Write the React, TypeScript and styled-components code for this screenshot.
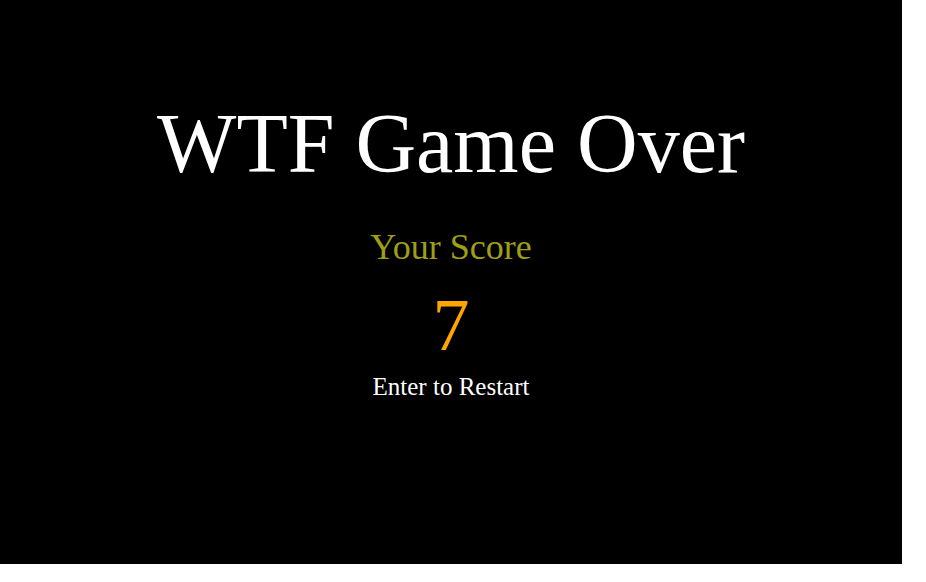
import React from "react";
import styled, { createGlobalStyle } from "styled-components";

const Global = createGlobalStyle`
  html, body { margin: 0; padding: 0; background: #ffffff; }
  body { font-family: Georgia, "Liberation Serif", serif; }
`;

const Screen = styled.div`
  width: 902px;
  height: 564px;
  background: #000000;
  display: flex;
  flex-direction: column;
  align-items: center;
  box-sizing: border-box;
  padding-top: 96px;
`;

const Title = styled.h1`
  margin: 0;
  font-family: Georgia, "Liberation Serif", serif;
  font-weight: normal;
  font-size: 84px;
  line-height: 96px;
  color: #ffffff;
`;

const Label = styled.div<{ $color: string; $size: number; $line: number; $mt: number }>`
  margin-top: ${(p) => p.$mt}px;
  font-family: Georgia, "Liberation Serif", serif;
  font-size: ${(p) => p.$size}px;
  line-height: ${(p) => p.$line}px;
  color: ${(p) => p.$color};
`;

export default function App() {
  return (
    <>
      <Global />
      <Screen>
        <Title>WTF Game Over</Title>
        <Label $color="#9f9f16" $size={36} $line={40} $mt={35}>Your Score</Label>
        <Label $color="#ffa500" $size={74} $line={72} $mt={22}>7</Label>
        <Label $color="#ffffff" $size={25} $line={30} $mt={11}>Enter to Restart</Label>
      </Screen>
    </>
  );
}
